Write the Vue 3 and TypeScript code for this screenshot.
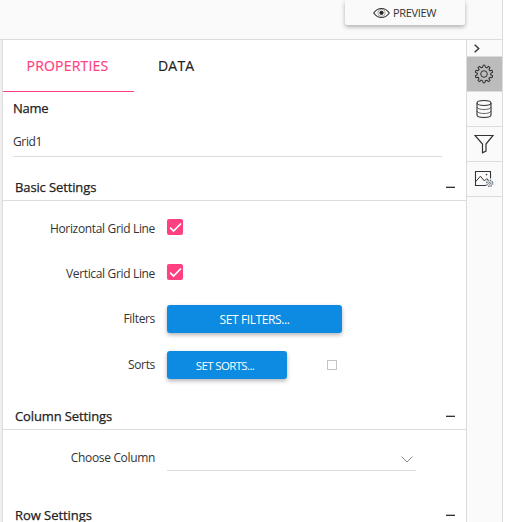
<script setup lang="ts">
import { ref } from 'vue'

const name = ref('Grid1')
const tabs = ['Properties', 'Data']
const activeTab = ref('Properties')
const gridLines = ref([
  { label: 'Horizontal Grid Line', key: 'horizontal', on: true },
  { label: 'Vertical Grid Line', key: 'vertical', on: true },
])
</script>

<template>
  <div class="designer">
    <div class="workspace">
      <header class="toolbar">
        <button class="preview">
          <svg width="17" height="12" viewBox="0 0 17 12" fill="none" stroke="#333">
            <path d="M.7 6C4.8 0 12.2 0 16.3 6 12.2 12 4.8 12 .7 6Z" stroke-width="1.1" />
            <circle cx="8.5" cy="5.8" r="3.6" stroke-width=".4" />
            <circle cx="8.5" cy="5.8" r="1.7" fill="#222" />
          </svg>
          <span class="preview-text">PREVIEW</span>
        </button>
      </header>

      <div class="body">
        <div class="gutter"></div>
        <main class="panel">
          <nav class="tabs">
            <button
              v-for="tab in tabs"
              :key="tab"
              class="tab"
              :class="{ active: tab === activeTab }"
              @click="activeTab = tab"
            ><span>{{ tab }}</span></button>
          </nav>

          <div class="name-block">
            <div class="name-label"><span>Name</span></div>
            <div class="name-value"><span>{{ name }}</span></div>
          </div>

          <section>
            <div class="section-head basic-head"><span>Basic Settings</span><i class="minus"></i></div>
            <div class="basic-body">
              <div v-for="line in gridLines" :key="line.key" class="row check-row">
                <label>{{ line.label }}</label>
                <button class="check" @click="line.on = !line.on">
                  <svg v-if="line.on" width="16" height="16" viewBox="0 0 16 16" fill="none" stroke="#fff" stroke-width="1.7">
                    <path d="M3.2 8.7 6.5 12 14 4.5" />
                  </svg>
                </button>
              </div>
              <div class="row filters-row">
                <label>Filters</label>
                <button class="action wide"><span>SET FILTERS...</span></button>
              </div>
              <div class="row">
                <label>Sorts</label>
                <button class="action"><span>SET SORTS...</span></button>
                <i class="empty-check"></i>
              </div>
            </div>
          </section>

          <section>
            <div class="section-head"><span>Column Settings</span><i class="minus"></i></div>
            <div class="column-body">
              <div class="row">
                <label>Choose Column</label>
                <div class="select">
                  <svg width="12" height="7" viewBox="0 0 12 7" fill="none" stroke="#888">
                    <path d="M.6.6 6 6 11.4.6" />
                  </svg>
                </div>
              </div>
            </div>
          </section>

          <section>
            <div class="section-head"><span class="rows">Row Settings</span><i class="minus"></i></div>
          </section>
        </main>

        <aside class="rail">
          <button class="collapse">
            <svg width="6" height="9" viewBox="0 0 6 9" fill="none" stroke="#333" stroke-width="1.4">
              <path d="M.7.7 4.7 4.5.7 8.3" />
            </svg>
          </button>
          <button class="tool selected">
            <svg width="20" height="20" viewBox="0 0 20 20" fill="none" stroke="#333" stroke-linejoin="round">
              <path
                v-for="n in 10"
                :key="n"
                :transform="`rotate(${(n - 1) * 36} 10 10)`"
                d="M8 3.5 8.7 3.3 9 1.2h2l.3 2.1.7.2 1 .5"
              />
              <circle cx="10" cy="10" r="3.3" />
            </svg>
          </button>
          <button class="tool">
            <svg width="18" height="20" viewBox="0 0 18 20" fill="none" stroke="#333" stroke-width="1.1">
              <ellipse cx="9" cy="4" rx="7" ry="2.5" />
              <path d="M2 4v12c0 1.4 3.1 2.5 7 2.5s7-1.1 7-2.5V4" />
              <path d="M2 8c0 1.4 3.1 2.5 7 2.5S16 9.4 16 8M2 12c0 1.4 3.1 2.5 7 2.5s7-1.1 7-2.5" stroke-width=".75" />
            </svg>
          </button>
          <button class="tool">
            <svg width="20" height="20" viewBox="0 0 20 20" fill="none" stroke="#333" stroke-width="1.2">
              <path d="M1 1.5h18L12 10v7L8.5 18.7V10Z" />
            </svg>
          </button>
          <button class="tool">
            <svg width="20" height="18" viewBox="0 0 20 18" fill="none" stroke="#333">
              <path d="M12 15.5H1.5v-14h15v7" stroke-width="1.1" />
              <path d="m1.8 11.5 4.6-5.3 4 4.8 2.3-2.3 1.6 1.3" />
              <circle cx="12.5" cy="4.6" r=".8" fill="#333" stroke="none" />
              <circle cx="15.6" cy="13.3" r="3.2" stroke="#64717d" stroke-width="1.2" stroke-dasharray="1.3 1.213" />
              <circle cx="15.6" cy="13.3" r="2.5" stroke="#7d8790" stroke-width=".6" />
              <circle cx="15.6" cy="13.3" r="1" stroke="#53606c" stroke-width=".8" />
            </svg>
          </button>
        </aside>
      </div>
    </div>
  </div>
</template>

<style>
body { overflow: hidden; background: #fff; }
</style>

<style scoped>
.designer, .designer * { box-sizing: border-box; }
.designer {
  width: 514px;
  height: 522px;
  overflow: hidden;
  font: 12px/16px "Open Sans", "Noto Sans", sans-serif;
  color: #333;
}
button { border: 0; padding: 0; margin: 0; background: none; font: inherit; color: inherit; }
svg { display: block; flex: none; }
span, label { white-space: nowrap; }
.workspace {
  width: 503px;
  height: 522px;
  display: flex;
  flex-direction: column;
  border-right: 1px solid #dcdcdc;
}
.toolbar {
  flex: none;
  height: 40px;
  display: flex;
  justify-content: flex-end;
  align-items: flex-start;
  padding-right: 37px;
  background: #fafafa;
  border-bottom: 1px solid #dcdcdc;
}
.preview {
  width: 120px;
  height: 25px;
  padding-left: 28px;
  display: flex;
  align-items: center;
  gap: 3px;
  border-radius: 2px;
  background: #fafafa;
  box-shadow: 0 2px 4px rgba(0, 0, 0, .3);
  font-size: 11px;
}
.preview-text { letter-spacing: -.35px; }
.body { flex: 1; min-height: 0; display: flex; }
.gutter { width: 3px; background: #f0f0f0; border-right: 1px solid #dcdcdc; }
.panel { width: 463px; background: #fff; overflow: hidden; }
.tabs { display: flex; height: 52px; }
.tab {
  height: 52px;
  padding: 0 24px;
  font-size: 14px;
  text-transform: uppercase;
  letter-spacing: .2px;
  -webkit-text-stroke: .2px currentColor;
  color: #222;
}
.tab.active { width: 131px; padding: 0 25px 0 23px; color: #ff4081; border-bottom: 1px solid #ff4081; }
.name-block { width: 429px; margin-left: 10px; }
.name-label {
  padding-top: 8px;
  font-size: 13px;
  letter-spacing: -.3px;
  -webkit-text-stroke: .25px currentColor;
  color: #222;
}
.name-value { height: 41px; padding-top: 18px; border-bottom: 1px solid #dcdcdc; letter-spacing: -.35px; }
.section-head {
  height: 29px;
  padding: 2px 11px 0 12px;
  display: flex;
  align-items: center;
  justify-content: space-between;
  border-bottom: 1px solid #dcdcdc;
  font-size: 13px;
  letter-spacing: -.12px;
  -webkit-text-stroke: .25px currentColor;
  color: #222;
}
.basic-head { margin-top: 15px; }
.rows { letter-spacing: -.05px; }
.minus { width: 9px; height: 1px; background: #333; box-shadow: 0 -1px 0 #bbb; }
.row { height: 28px; display: flex; align-items: center; }
.row label { width: 152px; margin-right: 12px; text-align: right; letter-spacing: -.34px; }
.check-row label { padding-top: 3px; }
.basic-body { height: 200px; padding-top: 12px; }
.check-row { margin-bottom: 17px; }
.filters-row { margin: 19px 0 18px; }
.check { width: 16px; height: 16px; border-radius: 2px; background: #ff4081; }
.action {
  width: 120px;
  height: 28px;
  padding: 1px 4px 0 0;
  border-radius: 3px;
  background: #0d8ae2;
  box-shadow: 0 2px 4px rgba(0, 0, 0, .3);
  font-size: 11.5px;
  color: #fff;
  letter-spacing: -.65px;
}
.action.wide { width: 175px; padding-right: 0; font-size: 12px; letter-spacing: -.4px; }
.empty-check { width: 10px; height: 10px; margin-left: 40px; border: 1px solid #c4c4c4; }
.column-body { height: 70px; padding-top: 14px; }
.select {
  width: 249px;
  height: 26px;
  display: flex;
  justify-content: flex-end;
  align-items: center;
  padding: 4px 3px 0 0;
  border-bottom: 1px solid #dcdcdc;
}
.rail { width: 36px; background: #fafafa; border-left: 1px solid #dcdcdc; }
.collapse { width: 35px; height: 17px; padding-left: 7px; display: flex; align-items: center; border-bottom: 1px solid #dcdcdc; }
.tool { width: 35px; height: 35px; padding-right: 2px; display: flex; justify-content: center; align-items: center; border-bottom: 1px solid #dcdcdc; }
.selected { background: #bcbcbc; }
</style>
